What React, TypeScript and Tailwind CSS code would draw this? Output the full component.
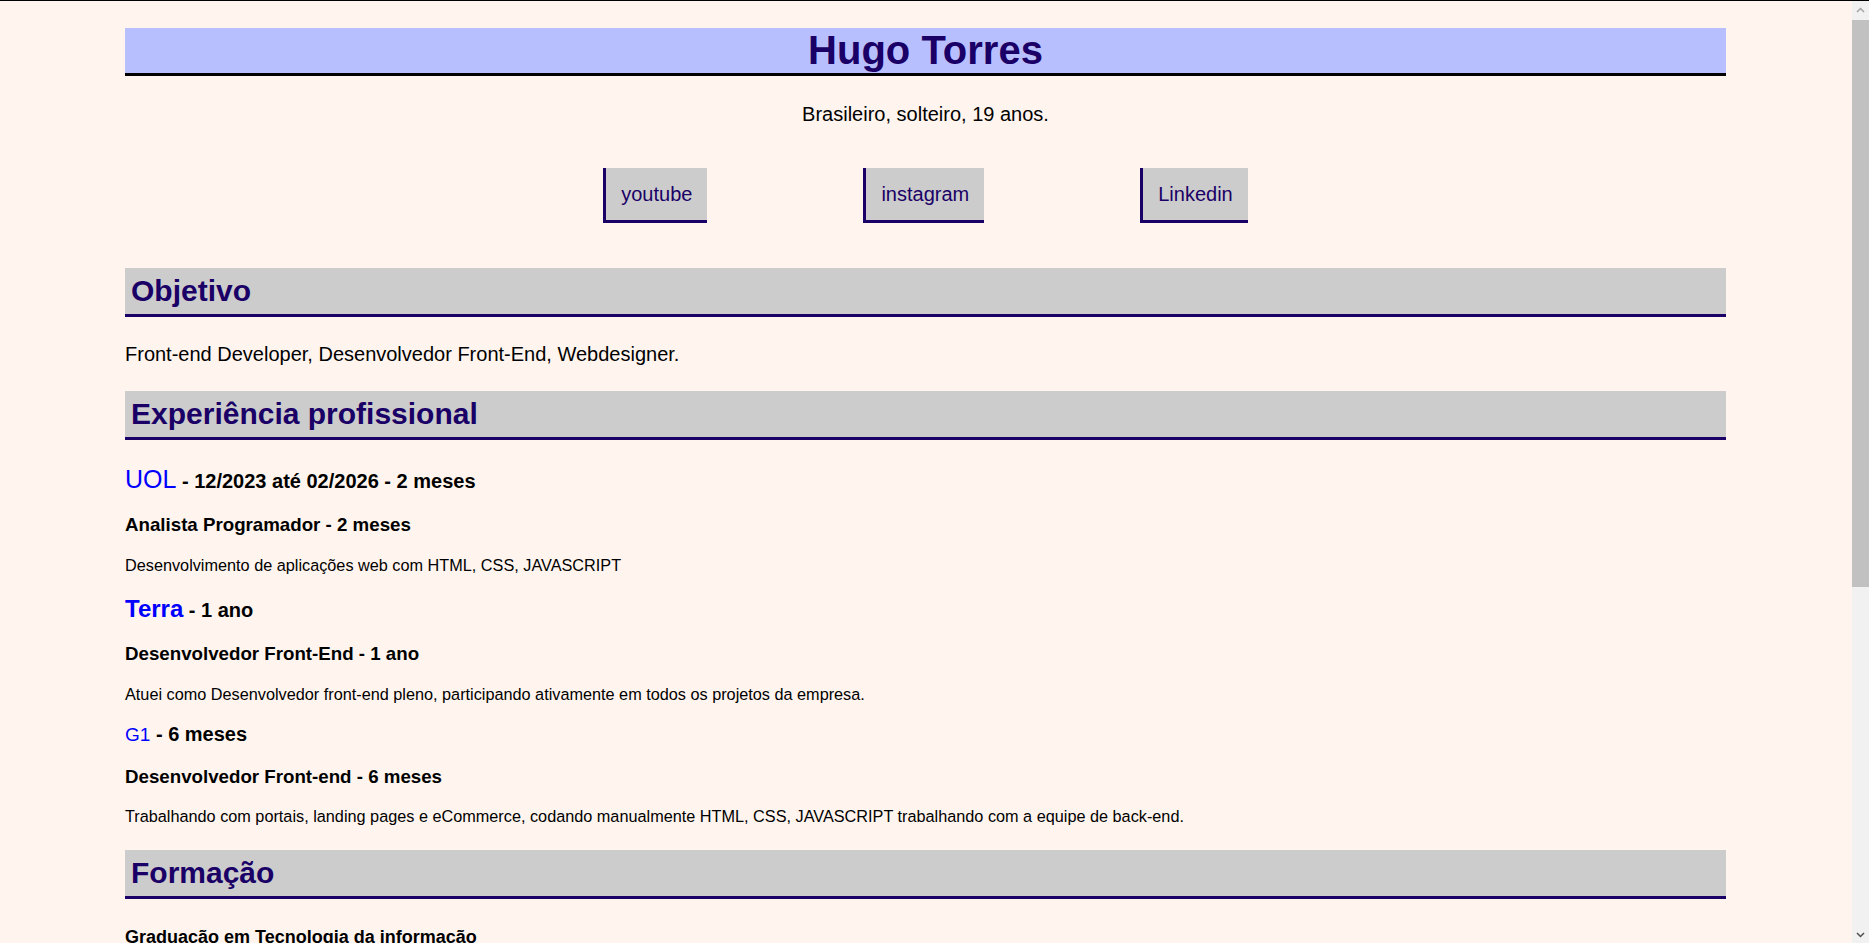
import React from "react";

const navy = "text-[#1a0066]";

function SectionTitle({ children, className = "" }: { children: React.ReactNode; className?: string }) {
  return (
    <h2
      className={`bg-[#cccccc] border-b-[3px] border-[#1a0066] pl-[6px] text-[30px] font-bold leading-[46px] text-[#1a0066] ${className}`}
    >
      {children}
    </h2>
  );
}

function Social({ label }: { label: string }) {
  return (
    <a
      href="#"
      className="block bg-[#cccccc] border-l-[3px] border-b-[3px] border-[#1a0066] px-[15px] pt-[15px] pb-[14px] text-[20px] leading-[23px] text-[#1a0066]"
    >
      {label}
    </a>
  );
}

export default function App() {
  return (
    <div className="h-[943px] overflow-hidden flex flex-col bg-[#fff5ee] font-['Liberation_Sans',Arial,sans-serif] text-black">
      <div className="h-px shrink-0 bg-black" />
      <div className="flex flex-1 min-h-0">
        <main className="flex-1 min-w-0 overflow-hidden">
          <div className="ml-[125px] w-[1601px] pt-[27px]">
            <h1 className={`bg-[#b8bfff] border-b-[3px] border-black text-center text-[40px] font-bold leading-[45px] ${navy}`}>
              Hugo Torres
            </h1>
            <p className="mt-[27px] text-center text-[20px] leading-[23px]">Brasileiro, solteiro, 19 anos.</p>
            <nav className="mt-[42px] flex justify-center gap-[156px]">
              <Social label="youtube" />
              <Social label="instagram" />
              <Social label="Linkedin" />
            </nav>

            <SectionTitle className="mt-[45px]">Objetivo</SectionTitle>
            <p className="mt-[26px] text-[20px] leading-[23px]">Front-end Developer, Desenvolvedor Front-End, Webdesigner.</p>

            <SectionTitle className="mt-[25px]">Experiência profissional</SectionTitle>

            <h3 className="mt-[25px] text-[20px] font-bold leading-[28px]">
              <a href="#" className="text-[25px] font-normal text-[#0000ff]">UOL</a> - 12/2023 até 02/2026 - 2 meses
            </h3>
            <h4 className="mt-[19px] text-[18.72px] font-bold leading-[22px]">Analista Programador - 2 meses</h4>
            <p className="mt-[20px] text-[16.25px] leading-[18px]">Desenvolvimento de aplicações web com HTML, CSS, JAVASCRIPT</p>

            <h3 className="mt-[21px] text-[20px] font-bold leading-[28px]">
              <a href="#" className="text-[24px] font-bold text-[#0000ff]">Terra</a> - 1 ano
            </h3>
            <h4 className="mt-[19px] text-[18.72px] font-bold leading-[22px]">Desenvolvedor Front-End - 1 ano</h4>
            <p className="mt-[20px] text-[16.25px] leading-[18px]">
              Atuei como Desenvolvedor front-end pleno, participando ativamente em todos os projetos da empresa.
            </p>

            <h3 className="mt-[19px] text-[20px] font-bold leading-[24px]">
              <a href="#" className="text-[19px] font-normal text-[#0000ff]">G1</a> - 6 meses
            </h3>
            <h4 className="mt-[19px] text-[18.72px] font-bold leading-[22px]">Desenvolvedor Front-end - 6 meses</h4>
            <p className="mt-[19px] text-[16.25px] leading-[18px]">
              Trabalhando com portais, landing pages e eCommerce, codando manualmente HTML, CSS, JAVASCRIPT trabalhando com a equipe de back-end.
            </p>

            <SectionTitle className="mt-[25px]">Formação</SectionTitle>
            <h4 className="mt-[27px] text-[18px] font-bold leading-[22px]">Graduação em Tecnologia da informação</h4>
            <p className="mt-[20px] text-[16.25px] leading-[18px]">Universidade - 2022 até 2026</p>
          </div>
        </main>
        <div className="w-[17px] shrink-0 bg-[#f1f1f1] flex flex-col">
          <div className="h-[17px] flex items-center justify-center">
            <svg width="9" height="6" viewBox="0 0 9 6">
              <path d="M1 5 L4.5 1.5 L8 5" fill="none" stroke="#a3a3a3" strokeWidth="1.5" />
            </svg>
          </div>
          <div className="mt-[2px] h-[567px] bg-[#c1c1c1]" />
          <div className="flex-1" />
          <div className="h-[17px] flex items-center justify-center">
            <svg width="9" height="6" viewBox="0 0 9 6">
              <path d="M1 1 L4.5 4.5 L8 1" fill="none" stroke="#505050" strokeWidth="1.5" />
            </svg>
          </div>
        </div>
      </div>
    </div>
  );
}
